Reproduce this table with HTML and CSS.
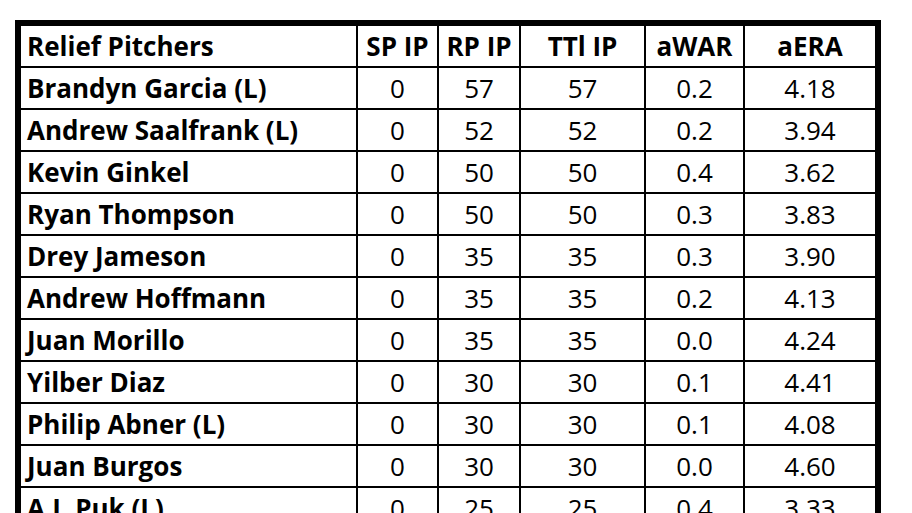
FILE: index.html
```html
<!DOCTYPE html>
<html>
<head>
<meta charset="utf-8">
<link rel="stylesheet" href="styles.css">
</head>
<body>
<table class="stats">
  <colgroup>
    <col class="c-name"><col class="c-sp"><col class="c-rp"><col class="c-tt"><col class="c-war"><col class="c-era">
  </colgroup>
  <thead>
    <tr><th class="name">Relief Pitchers</th><th>SP IP</th><th>RP IP</th><th>TTl IP</th><th>aWAR</th><th>aERA</th></tr>
  </thead>
  <tbody>
    <tr><td class="name">Brandyn Garcia (L)</td><td>0</td><td>57</td><td>57</td><td>0.2</td><td>4.18</td></tr>
    <tr><td class="name">Andrew Saalfrank (L)</td><td>0</td><td>52</td><td>52</td><td>0.2</td><td>3.94</td></tr>
    <tr><td class="name">Kevin Ginkel</td><td>0</td><td>50</td><td>50</td><td>0.4</td><td>3.62</td></tr>
    <tr><td class="name">Ryan Thompson</td><td>0</td><td>50</td><td>50</td><td>0.3</td><td>3.83</td></tr>
    <tr><td class="name">Drey Jameson</td><td>0</td><td>35</td><td>35</td><td>0.3</td><td>3.90</td></tr>
    <tr><td class="name">Andrew Hoffmann</td><td>0</td><td>35</td><td>35</td><td>0.2</td><td>4.13</td></tr>
    <tr><td class="name">Juan Morillo</td><td>0</td><td>35</td><td>35</td><td>0.0</td><td>4.24</td></tr>
    <tr><td class="name">Yilber Diaz</td><td>0</td><td>30</td><td>30</td><td>0.1</td><td>4.41</td></tr>
    <tr><td class="name">Philip Abner (L)</td><td>0</td><td>30</td><td>30</td><td>0.1</td><td>4.08</td></tr>
    <tr><td class="name">Juan Burgos</td><td>0</td><td>30</td><td>30</td><td>0.0</td><td>4.60</td></tr>
    <tr><td class="name">A.J. Puk (L)</td><td>0</td><td>25</td><td>25</td><td>0.4</td><td>3.33</td></tr>
  </tbody>
</table>
</body>
</html>
```
FILE: styles.css
```css
html, body {
  margin: 0;
  padding: 0;
  background: #fff;
  overflow: hidden;
}
body {
  font-family: "Open Sans", Lato, sans-serif;
  color: #000;
}
.stats {
  margin: 20px 0 0 15px;
  border-collapse: collapse;
  table-layout: fixed;
  width: 866px;
  border: 6px solid #000;
}
.c-name { width: 339px; }
.c-sp { width: 81px; }
.c-rp { width: 82px; }
.c-tt { width: 125px; }
.c-war { width: 99px; }
.c-era { width: 134px; }
.stats th, .stats td {
  border: 2px solid #000;
  height: 40px;
  padding: 0;
  text-align: center;
  vertical-align: middle;
  font-size: 26px;
  font-weight: 400;
  line-height: 1;
  white-space: nowrap;
}
.stats th {
  font-weight: 700;
}
.stats .name {
  text-align: left;
  padding-left: 6px;
  font-weight: 700;
}
```
